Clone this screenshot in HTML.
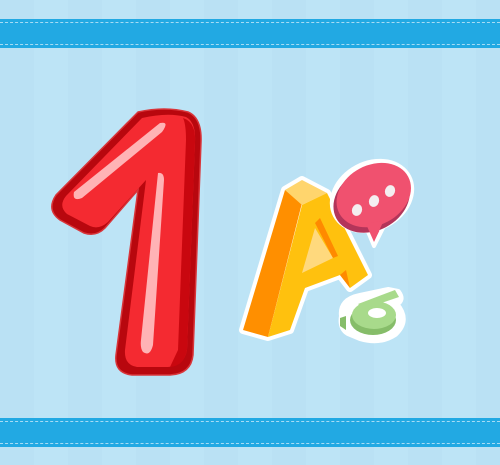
<!DOCTYPE html>
<html><head><style>
html,body{margin:0;padding:0;}
body{width:500px;height:465px;overflow:hidden;background:#bde4f6;position:relative;}
.band{position:absolute;left:0;width:500px;height:29px;background:#22a9e3;}
.band:before,.band:after{content:"";position:absolute;left:0;right:0;border-top:1px dashed #a6dcf5;}
.band:before{top:3px}.band:after{bottom:3px}
</style></head><body>
<svg width="500" height="465" style="position:absolute;left:0;top:0">
<g fill="#b3dcf0" opacity="0.25">
<rect x="0" y="0" width="34" height="465"/><rect x="68" y="0" width="34" height="465"/><rect x="136" y="0" width="34" height="465"/><rect x="204" y="0" width="34" height="465"/><rect x="272" y="0" width="34" height="465"/><rect x="340" y="0" width="34" height="465"/><rect x="408" y="0" width="34" height="465"/><rect x="476" y="0" width="34" height="465"/>
</g>
<!-- number 1 -->
<path d="M138,112 Q165,106 188,112 Q202,118 201,142 L193,355 Q191,374 170,375 L132,375 Q114,373 116,355 L138,190 L105,228 Q96,237 84,233 L60,220 Q46,210 56,195 Z" fill="#b8070e" stroke="#d9353a" stroke-width="1.5"/>
<path d="M142,118 Q168,112 186,117 Q196,122 195,142 L187,350 Q184,366 168,367 L137,367 Q124,365 125,350 L146,180 L108,222 Q99,230 90,226 L67,214 Q58,206 66,196 Z" fill="#f42a31"/>
<path d="M183,118 Q196,122 195,142 L187,350 Q184,366 170,367 L178,350 L186,140 Q186,124 183,118Z" fill="#c9070f"/>
<path d="M158,173 Q164,172 164,180 L153,345 Q150,357 143,352 Q140,348 141,340 Z" fill="#ffb3b5"/>
<path d="M160,123 Q170,121 162,132 L82,198 Q72,202 74,192 Z" fill="#ffb3b5"/>
<!-- A -->
<path d="M243,330 L285,190 L302,180 L327,193 L368,275 L350,288 L340,275 L305,288 L290,330 L268,337 Z" fill="#fff" stroke="#fff" stroke-width="8" stroke-linejoin="round"/>
<path d="M243,330 L285,190 L302,203 L268,337 Z" fill="#ff8f00"/>
<path d="M285,190 L302,180 L327,193 L302,205 Z" fill="#ffd56d"/>
<path d="M268,337 L302,205 L327,193 L368,275 L350,288 L340,275 L305,288 L290,330 Z" fill="#ffc10e"/>
<path d="M315,228 L333,258 L302,273 Z" fill="#ffd97d"/>
<path d="M315,223 L320,218 L338,256 L333,258 Z" fill="#ff8a00"/>
<path d="M340,275 L350,288 L346,270 Z" fill="#ff8a00"/>
<!-- bubble -->
<path d="M364,222 L374,246 L388,218 Z" fill="#f0516f" stroke="#fff" stroke-width="4" stroke-linejoin="round"/>
<g transform="rotate(-28 372 196)">
<ellipse cx="372" cy="196" rx="44" ry="35" fill="#fff"/>
<ellipse cx="370" cy="199" rx="40" ry="31" fill="#b3355a"/>
<ellipse cx="374" cy="196" rx="39" ry="30" fill="#f0516f"/>
</g>
<path d="M366,224 L374,242 L384,220 Z" fill="#f0516f"/>
<ellipse cx="357" cy="210" rx="5" ry="6" fill="#f4eef0" transform="rotate(20 357 210)"/>
<ellipse cx="374" cy="201" rx="5" ry="6" fill="#f4eef0" transform="rotate(20 374 201)"/>
<ellipse cx="390" cy="191" rx="5" ry="6" fill="#f4eef0" transform="rotate(20 390 191)"/>
<!-- б -->
<path d="M342,316 Q340,300 360,296 L388,290 L398,292 Q404,300 396,304 Q410,320 395,334 Q380,344 360,338 L348,333 Q340,328 342,316Z" fill="#fff" stroke="#fff" stroke-width="6" stroke-linejoin="round"/>
<ellipse cx="373" cy="320" rx="23" ry="15" fill="#86bd69"/>
<ellipse cx="374" cy="315" rx="22" ry="14" fill="#a8da8b"/>
<ellipse cx="377" cy="313" rx="9" ry="5" fill="#fff"/>
<path d="M358,304 L395,290 L399,297 L364,309Z" fill="#a8da8b"/>
<path d="M340,318 L346,316 L346,330 L340,326Z" fill="#86bd69"/>
</svg>
<div class="band" style="top:19px"></div>
<div class="band" style="top:418px"></div>
</body></html>
